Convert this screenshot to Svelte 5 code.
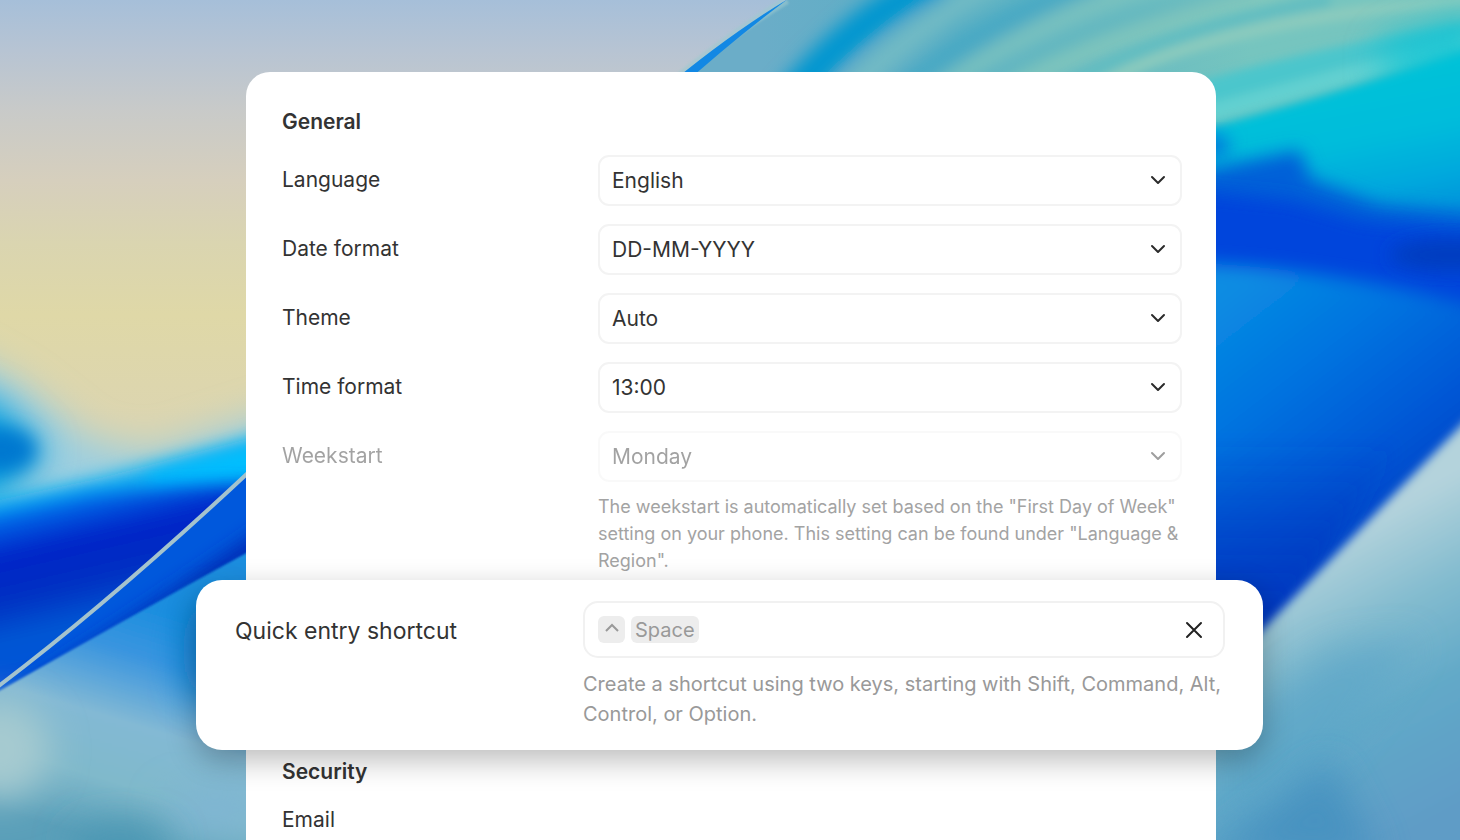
<style>
  :global(body) {
    background: #0a6fd8;
  }
  .stage {
    position: relative;
    box-sizing: border-box;
    height: 100vh;
    padding: 72px 244px 0 246px;
    overflow: hidden;
    color: #333;
    font-family: Inter, "Liberation Sans", sans-serif;
    font-size: 21px;
    line-height: 28px;
  }
  .wallpaper {
    position: absolute;
    top: 0;
    left: 0;
    width: 100%;
    height: 100%;
  }
  .card {
    position: relative;
    box-sizing: border-box;
    min-height: 100%;
    padding: 36px 34px 36px 36px;
    border-radius: 24px 24px 0 0;
    background: #fff;
  }
  h2 {
    margin: 0;
    font-size: 21px;
    font-weight: 600;
    line-height: 28px;
  }
  .rows {
    display: flex;
    flex-direction: column;
    gap: 18px;
    margin-top: 19px;
  }
  .row {
    display: grid;
    grid-template-columns: 316px 1fr;
  }
  .row label {
    line-height: 50px;
  }
  .select {
    position: relative;
  }
  select {
    display: block;
    box-sizing: border-box;
    width: 100%;
    height: 51px;
    padding: 0 48px 0 12px;
    border: 2px solid #f3f3f3;
    border-radius: 11px;
    background: #fff;
    color: #333;
    font: inherit;
    appearance: none;
    opacity: 1;
  }
  .select svg {
    position: absolute;
    top: 17px;
    right: 16px;
    pointer-events: none;
  }
  .disabled label,
  .disabled .select {
    opacity: 0.45;
  }
  .hint {
    margin: 11px 0 0;
    color: #a3a3a3;
    font-size: 18px;
    line-height: 27px;
  }
  .quick {
    position: relative;
    display: grid;
    grid-template-columns: 348px 1fr;
    box-sizing: border-box;
    min-height: 170px;
    margin: 6px -81px 8px -86px;
    padding: 21px 38px 21px 39px;
    border-radius: 26px;
    background: #fff;
    box-shadow: 0 10px 30px rgba(0, 0, 0, 0.27);
  }
  .quick label {
    font-size: 23px;
    line-height: 60px;
  }
  .quick .hint {
    color: #999;
    font-size: 20px;
    line-height: 30px;
  }
  .shortcut {
    display: flex;
    align-items: center;
    box-sizing: border-box;
    height: 57px;
    padding: 0 13px;
    border: 2px solid #f1f1f1;
    border-radius: 15px;
  }
  button {
    padding: 0;
    border: none;
    background: none;
    font: inherit;
    cursor: pointer;
  }
  .keys {
    display: flex;
    flex: 1;
    gap: 6px;
  }
  kbd {
    display: flex;
    align-items: center;
    justify-content: center;
    min-width: 27px;
    height: 27px;
    border-radius: 6px;
    background: #ededed;
    color: #999;
    font-family: inherit;
    font-size: 20px;
  }
  kbd.word {
    padding: 0 4px;
  }
  .clear {
    display: flex;
    padding: 6px;
  }
  .email {
    margin: 20px 0 0;
  }
</style>

<script>
  let settings = [
    { id: 'language', label: 'Language', value: 'English', options: ['English', 'Nederlands', 'Deutsch'] },
    { id: 'date-format', label: 'Date format', value: 'DD-MM-YYYY', options: ['DD-MM-YYYY', 'MM-DD-YYYY', 'YYYY-MM-DD'] },
    { id: 'theme', label: 'Theme', value: 'Auto', options: ['Auto', 'Light', 'Dark'] },
    { id: 'time-format', label: 'Time format', value: '13:00', options: ['13:00', '1:00 PM'] },
    { id: 'weekstart', label: 'Weekstart', value: 'Monday', options: ['Monday', 'Sunday'], disabled: true },
  ];

  let hasShortcut = true;

  const clearShortcut = () => {
    hasShortcut = false;
  }
  const setShortcut = () => {
    hasShortcut = true;
  }
</script>

<div class="stage">
  <svg class="wallpaper" viewBox="0 0 1460 840" preserveAspectRatio="xMidYMid slice" aria-hidden="true">
    <defs>
      <linearGradient id="sky" x1="0" y1="0" x2="0" y2="420" gradientUnits="userSpaceOnUse">
        <stop offset="0" stop-color="#a6bfd9" />
        <stop offset="0.12" stop-color="#b7c4d3" />
        <stop offset="0.26" stop-color="#c8cac9" />
        <stop offset="0.43" stop-color="#d6cfbd" />
        <stop offset="0.58" stop-color="#dad5b0" />
        <stop offset="0.75" stop-color="#dfd8a7" />
        <stop offset="1" stop-color="#dcd5b0" />
      </linearGradient>
      <linearGradient id="wave" x1="60" y1="465" x2="105" y2="660" gradientUnits="userSpaceOnUse">
        <stop offset="0" stop-color="#00a0f0" />
        <stop offset="0.18" stop-color="#0070ec" />
        <stop offset="0.38" stop-color="#0024c8" />
        <stop offset="0.6" stop-color="#0030c2" />
        <stop offset="0.8" stop-color="#0058d4" />
        <stop offset="1" stop-color="#0050d8" />
      </linearGradient>
      <linearGradient id="shore" x1="170" y1="610" x2="100" y2="840" gradientUnits="userSpaceOnUse">
        <stop offset="0" stop-color="#1a8edf" />
        <stop offset="0.22" stop-color="#3a95df" />
        <stop offset="0.5" stop-color="#83b9d4" />
        <stop offset="0.75" stop-color="#80b9cb" />
        <stop offset="1" stop-color="#5a9fb9" />
      </linearGradient>
      <linearGradient id="petal" x1="760" y1="0" x2="1250" y2="0" gradientUnits="userSpaceOnUse">
        <stop offset="0" stop-color="#6badc8" />
        <stop offset="0.4" stop-color="#58afc4" />
        <stop offset="1" stop-color="#76c5bf" />
      </linearGradient>
      <linearGradient id="lagoon" x1="1300" y1="90" x2="1330" y2="240" gradientUnits="userSpaceOnUse">
        <stop offset="0" stop-color="#00c2d8" />
        <stop offset="0.4" stop-color="#00bcdb" />
        <stop offset="0.7" stop-color="#00aadd" />
        <stop offset="1" stop-color="#0092dc" />
      </linearGradient>
      <linearGradient id="deep" x1="1216" y1="300" x2="1400" y2="540" gradientUnits="userSpaceOnUse">
        <stop offset="0" stop-color="#0a8ce2" />
        <stop offset="0.35" stop-color="#0074e0" />
        <stop offset="0.7" stop-color="#0058d6" />
        <stop offset="1" stop-color="#0040c4" />
      </linearGradient>
      <linearGradient id="deepShade" x1="0" y1="440" x2="0" y2="620" gradientUnits="userSpaceOnUse">
        <stop offset="0" stop-color="#0038c0" stop-opacity="0" />
        <stop offset="1" stop-color="#0038c0" />
      </linearGradient>
      <linearGradient id="beach" x1="1350" y1="530" x2="1490" y2="790" gradientUnits="userSpaceOnUse">
        <stop offset="0" stop-color="#b4d3dc" />
        <stop offset="0.3" stop-color="#84bccf" />
        <stop offset="0.6" stop-color="#62a9c8" />
        <stop offset="1" stop-color="#5f9cc6" />
      </linearGradient>
      <filter id="blur1" x="-20%" y="-20%" width="140%" height="140%"><feGaussianBlur stdDeviation="1" /></filter>
      <filter id="blur5" x="-30%" y="-30%" width="160%" height="160%"><feGaussianBlur stdDeviation="5" /></filter>
      <filter id="blur9" x="-50%" y="-50%" width="200%" height="200%"><feGaussianBlur stdDeviation="9" /></filter>
      <filter id="blur18" x="-80%" y="-80%" width="260%" height="260%"><feGaussianBlur stdDeviation="18" /></filter>
    </defs>

    <rect width="1460" height="840" fill="url(#sky)" />

    <!-- left waves -->
    <path d="M-60 340 L20 385 L90 440 L150 452 L300 405 V640 H-60 Z" fill="#9ccfe0" filter="url(#blur18)" />
    <path d="M-60 380 L0 405 L45 450 L0 500 L-60 510 Z" fill="#009fe0" filter="url(#blur18)" />
    <ellipse cx="0" cy="450" rx="36" ry="22" fill="#0078d0" filter="url(#blur9)" />
    <path d="M-40 508 L100 478 L300 425 V560 H-40 Z" fill="#08b0f2" filter="url(#blur9)" />
    <path d="M150 475 L300 435 V500 H150 Z" fill="#00c0ff" filter="url(#blur9)" />
    <path d="M-40 520 L90 494 L180 486 L300 480 V760 H-40 Z" fill="url(#wave)" filter="url(#blur9)" />
    <path d="M-20 700 Q110 602 270 451 V700 Z" fill="#0058dc" />
    <path d="M-20 712 Q100 640 270 522 V620 L0 740 Z" fill="#002fb8" filter="url(#blur9)" />
    <path d="M-20 702 Q120 622 270 540 V860 H-20 Z" fill="url(#shore)" filter="url(#blur1)" />
    <ellipse cx="0" cy="750" rx="50" ry="50" fill="#a6cad0" filter="url(#blur18)" />
    <ellipse cx="205" cy="650" rx="22" ry="50" fill="#0a80d0" filter="url(#blur18)" />
    <ellipse cx="215" cy="810" rx="50" ry="22" fill="#7fb5d3" filter="url(#blur18)" />
    <ellipse cx="120" cy="845" rx="50" ry="22" fill="#4896b2" filter="url(#blur18)" />
    <path d="M-4 688 Q110 602 250 471" fill="none" stroke="#a4c3cd" stroke-width="4" />

    <!-- right petal -->
    <path d="M660 92 Q730 34 787 0 H1460 V840 H660 Z" fill="url(#petal)" />
    <g fill="none" filter="url(#blur9)">
      <path d="M780 110 Q850 20 940 -20" stroke="#0096d0" stroke-width="32" />
      <path d="M840 100 Q910 30 1000 -20" stroke="#74bcc4" stroke-width="20" />
      <path d="M890 100 Q990 20 1100 -20" stroke="#45a7c4" stroke-width="22" />
      <path d="M925 100 Q1030 20 1190 -30" stroke="#80c5be" stroke-width="16" />
      <path d="M990 90 Q1080 20 1250 -10" stroke="#5ab3c0" stroke-width="12" />
      <path d="M1000 95 Q1110 30 1290 -10" stroke="#84c8bc" stroke-width="18" />
    </g>
    <g fill="none" filter="url(#blur5)">
      <path d="M1060 90 Q1160 30 1330 0" stroke="#62bdc1" stroke-width="12" />
      <path d="M1090 90 Q1210 20 1470 0" stroke="#8ccbbd" stroke-width="12" />
      <path d="M1190 100 Q1300 66 1480 34" stroke="#4cc6cc" stroke-width="30" />
      <path d="M1190 118 Q1310 86 1480 40" stroke="#62d0d0" stroke-width="18" />
    </g>
    <path d="M1380 42 L1480 10 V80 L1380 80 Z" fill="#00c2d6" opacity="0.7" filter="url(#blur18)" />
    <path d="M1190 132 Q1320 98 1480 45 V400 H1190 Z" fill="url(#lagoon)" filter="url(#blur5)" />
    <ellipse cx="1212" cy="146" rx="18" ry="12" fill="#0078dc" filter="url(#blur9)" />
    <path d="M1190 172 L1300 150 L1310 178 L1380 205 L1490 215 V420 H1190 Z" fill="#0060d8" filter="url(#blur9)" />
    <path d="M1190 190 L1290 200 L1360 220 L1490 232 V330 H1190 Z" fill="#0044dc" filter="url(#blur9)" />
    <ellipse cx="1450" cy="255" rx="60" ry="16" fill="#003cc0" filter="url(#blur9)" />
    <path d="M1180 262 Q1340 268 1490 310 V720 H1180 Z" fill="url(#deep)" filter="url(#blur9)" />
    <path d="M1180 440 H1400 L1250 680 H1180 Z" fill="url(#deepShade)" filter="url(#blur9)" />
    <path d="M1180 715 Q1320 570 1490 396 V880 H1180 Z" fill="url(#beach)" filter="url(#blur5)" />
    <path d="M1216 740 L1330 650 L1420 640 L1330 760 L1216 860 Z" fill="#5ba6c8" opacity="0.7" filter="url(#blur18)" />
    <path d="M1200 860 L1330 760 L1380 860 Z" fill="#428fbf" opacity="0.8" filter="url(#blur18)" />

    <path d="M660 92 Q730 34 787 0" fill="none" stroke="#9dc9cf" stroke-width="8" opacity="0.6" filter="url(#blur1)" />
    <path d="M660 92 Q728 35 788 -1 Q735 38 675 92 Z" fill="#1288e4" />
  </svg>

  <main class="card">
    <h2>General</h2>
    <div class="rows">
      {#each settings as setting}
        <div class="row" class:disabled={setting.disabled}>
          <label for={setting.id}>{setting.label}</label>
          <div>
            <div class="select">
              <select id={setting.id} bind:value={setting.value} disabled={setting.disabled}>
                {#each setting.options as option}
                  <option value={option}>{option}</option>
                {/each}
              </select>
              <svg width="16" height="16" viewBox="0 0 16 16" aria-hidden="true">
                <path d="M2 5 L8 11 L14 5" fill="none" stroke="#2b2b2b" stroke-width="2" stroke-linecap="round" stroke-linejoin="round" />
              </svg>
            </div>
            {#if setting.disabled}
              <p class="hint">
                The weekstart is automatically set based on the "First Day of Week" setting on your phone. This setting can be found under "Language &amp; Region".
              </p>
            {/if}
          </div>
        </div>
      {/each}
    </div>

    <section class="quick">
      <label for="quick-entry">Quick entry shortcut</label>
      <div>
        <div class="shortcut">
          <button id="quick-entry" class="keys" on:click={setShortcut}>
            {#if hasShortcut}
              <kbd aria-label="Control">
                <svg width="16" height="18" viewBox="0 0 16 18" aria-hidden="true">
                  <path d="M2 10 L8 4 L14 10" fill="none" stroke="#999" stroke-width="2" />
                </svg>
              </kbd>
              <kbd class="word">Space</kbd>
            {/if}
          </button>
          <button class="clear" aria-label="Clear shortcut" on:click={clearShortcut}>
            <svg width="20" height="20" viewBox="0 0 20 20" aria-hidden="true">
              <path d="M3 3 L17 17 M17 3 L3 17" fill="none" stroke="#222" stroke-width="2" stroke-linecap="round" />
            </svg>
          </button>
        </div>
        <p class="hint">
          Create a shortcut using two keys, starting with Shift, Command, Alt, Control, or Option.
        </p>
      </div>
    </section>

    <h2>Security</h2>
    <p class="email">Email</p>
  </main>
</div>
